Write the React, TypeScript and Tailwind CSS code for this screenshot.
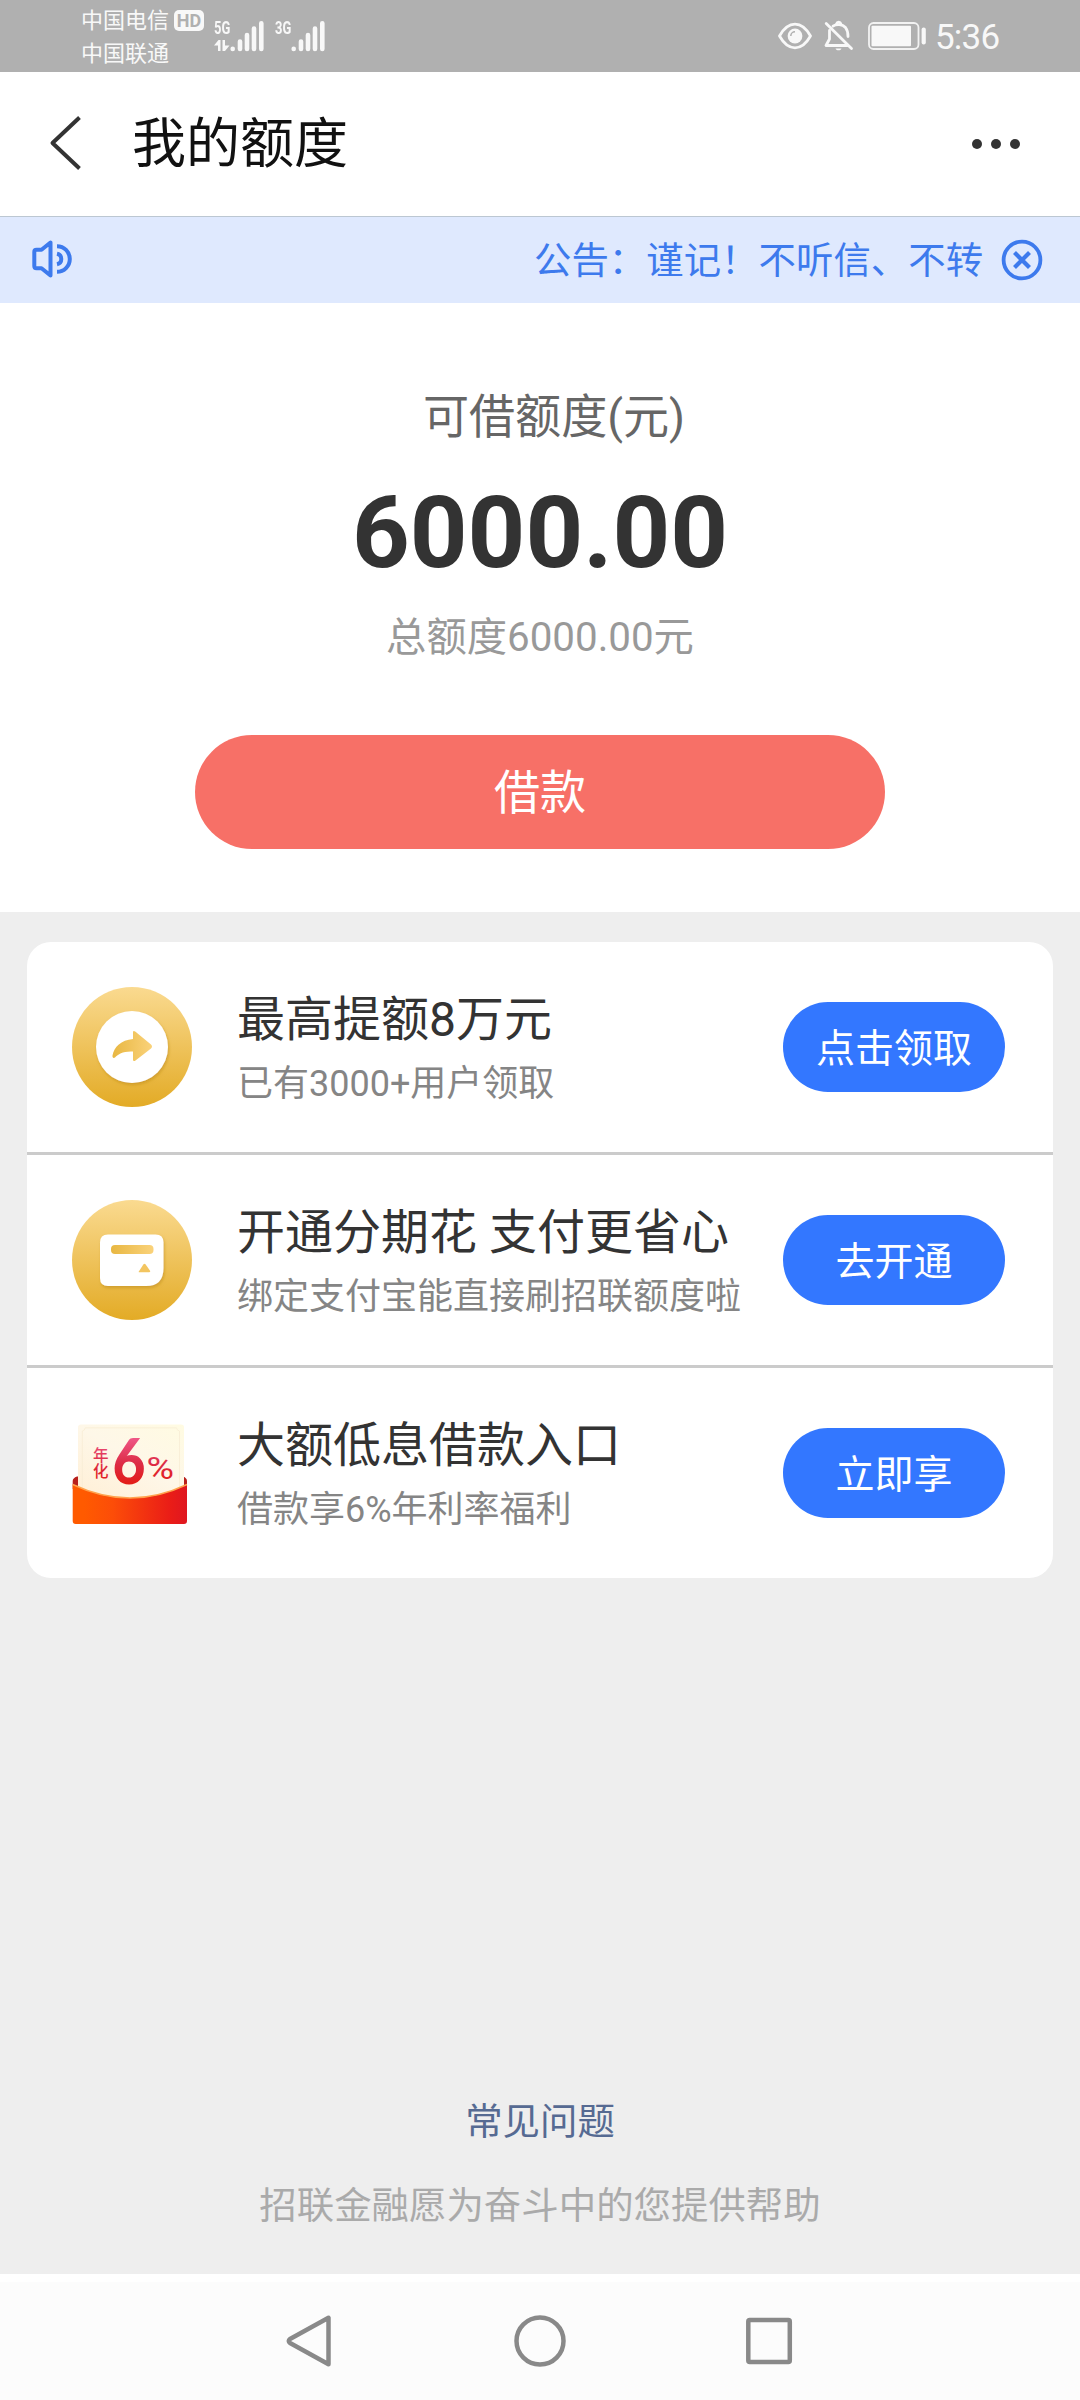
import type { ReactNode } from "react";

type Offer = {
  icon: ReactNode;
  title: string;
  desc: string;
  action: string;
};

function SignalBars() {
  return (
    <svg viewBox="0 0 34 32" className="h-8 w-[34px]" fill="none" stroke="#f8f8f8" strokeWidth="4.6" strokeLinecap="round" aria-hidden>
      <path d="M2.7 28.9V29M10 21.5V29M17 15V29M24 8.5V29M31.3 3.2V29" />
    </svg>
  );
}

function EyeIcon() {
  return (
    <svg viewBox="0 0 34 28" className="h-7 w-[34px]" aria-hidden>
      <path d="M1.5 14C6 6 11 2.2 17 2.2S28 6 32.5 14C28 22 23 25.8 17 25.8S6 22 1.5 14Z" fill="none" stroke="#f8f8f8" strokeWidth="2.8" strokeLinejoin="round" />
      <circle cx="17" cy="14" r="7.4" fill="#f8f8f8" />
      <path d="M12.8 14a4.2 4.2 0 0 1 4.2-4.2" fill="none" stroke="#b0b0b0" strokeWidth="1.5" />
    </svg>
  );
}

function BellOffIcon() {
  return (
    <svg viewBox="0 0 30 32" className="h-8 w-[30px]" fill="none" stroke="#f8f8f8" strokeWidth="2.8" strokeLinecap="round" strokeLinejoin="round" aria-hidden>
      <path d="M2.2 3.5 27.5 28.5" />
      <path d="M5.5 10.5V19l-3.5 6.5H23.5" />
      <path d="M9 6.2C12 4 18.5 4 21.5 7.5c2.3 3 2.5 5.5 2.5 9" />
      <path d="M12.5 3.8a2.3 2.3 0 0 1 4.4 0" />
      <path d="M11.5 28.4h6c-.8 2.5-5.2 2.5-6 0Z" fill="#f8f8f8" stroke="none" />
    </svg>
  );
}

function BatteryIcon() {
  return (
    <svg viewBox="0 0 58 28" className="h-7 w-[58px]" aria-hidden>
      <rect x="1" y="1" width="49.5" height="26" rx="4.5" fill="none" stroke="#f2f2f2" strokeWidth="1.8" />
      <rect x="3.5" y="3.8" width="39.5" height="20.4" rx="1" fill="#f8f8f8" />
      <rect x="53.6" y="5.5" width="4.2" height="17" rx="2" fill="#f8f8f8" />
    </svg>
  );
}

function StatusBar() {
  return (
    <div className="flex h-[72px] bg-[#b0b0b0] text-[#f8f8f8]">
      <div className="ml-[81px] flex h-[72px] flex-col pt-1 text-[22px] leading-[33px]">
        <div className="flex items-center">
          <span>中国电信</span>
          <span className="ml-[5px] flex h-[21px] w-[30px] items-center justify-center rounded-[5px] bg-[#f8f8f8] text-[18px] leading-none font-bold text-[#b0b0b0]">
            HD
          </span>
        </div>
        <span>中国联通</span>
      </div>
      <div className="mt-5 ml-2.5 flex h-8">
        <div className="flex w-4 flex-col">
          <span className="origin-left scale-x-[0.72] text-[18px] leading-4 font-bold">5G</span>
          <svg viewBox="0 0 16 12" className="mt-1 h-3 w-4" fill="#f8f8f8" aria-hidden>
            <path d="M0 5.5 4.5 0H6.5V11H4V5.5ZM8.5 0H11V5.5H15.5L11 11H8.5Z" />
          </svg>
        </div>
        <SignalBars />
      </div>
      <div className="mt-5 ml-[11px] flex h-8">
        <span className="w-4 origin-left scale-x-[0.72] text-[18px] leading-4 font-bold">3G</span>
        <SignalBars />
      </div>
      <div className="mr-[79px] ml-auto flex items-center">
        <EyeIcon />
        <span className="ml-3 flex"><BellOffIcon /></span>
        <span className="ml-[14px] flex"><BatteryIcon /></span>
        <span className="ml-[9px] w-[66px] pt-0.5 text-[35px] leading-none tracking-[-0.8px] whitespace-nowrap">5:36</span>
      </div>
    </div>
  );
}

function Header() {
  return (
    <header className="flex h-[145px] items-center border-b border-[#bcc7d2] bg-white">
      <svg viewBox="0 0 34 54" className="mb-0.5 ml-12 h-[54px] w-[34px]" fill="none" stroke="#333" strokeWidth="4" aria-hidden>
        <path d="M31.5 1.5 4.5 27 31.5 52.5" strokeLinejoin="round" />
      </svg>
      <h1 className="ml-[50px] pt-0.5 text-[54px] leading-[72px] text-[#111]">我的额度</h1>
      <div className="mr-[60px] ml-auto flex gap-[9px]">
        <i className="size-2.5 rounded-full bg-[#333]" />
        <i className="size-2.5 rounded-full bg-[#333]" />
        <i className="size-2.5 rounded-full bg-[#333]" />
      </div>
    </header>
  );
}

function Notice() {
  return (
    <div className="flex h-[86px] items-center bg-[#dfe9fe] text-[#3d7aed]">
      <svg viewBox="0 0 40 38" className="mb-[3px] ml-8 h-[38px] w-10" fill="none" stroke="currentColor" strokeWidth="4" aria-hidden>
        <path d="M18.5 2.5V35.5L9.5 28.2H4.5Q2.3 28.2 2.3 26V12Q2.3 9.8 4.5 9.8H9.5Z" strokeLinejoin="round" />
        <path d="M25 6.2a12.7 12.7 0 0 1 0 25.6M25 13.8a5.3 5.3 0 0 1 0 10.4" />
      </svg>
      <div className="ml-[462px] w-[450px] pt-0.5 text-[37.44px] leading-[54px] whitespace-nowrap">
        公告：谨记！不听信、不转
      </div>
      <svg viewBox="0 0 42 42" className="ml-[17px] size-[42px]" fill="none" stroke="currentColor" strokeWidth="3.8" aria-hidden>
        <circle cx="21" cy="21" r="18.4" />
        <path d="M13.5 13.5 28.5 28.5M28.5 13.5 13.5 28.5" strokeWidth="4.2" />
      </svg>
    </div>
  );
}

function ShareCoin() {
  return (
    <svg viewBox="0 0 120 120" className="size-[120px]" aria-hidden>
      <defs>
        <linearGradient id="coin" x1="0" y1="0" x2="0" y2="1">
          <stop offset="0" stopColor="#fada90" />
          <stop offset="1" stopColor="#e3ab26" />
        </linearGradient>
        <linearGradient id="arrow" x1="0" y1="0" x2="1" y2="0">
          <stop offset="0" stopColor="#e8b742" />
          <stop offset="1" stopColor="#fad27a" />
        </linearGradient>
        <filter id="soft" x="-20%" y="-20%" width="140%" height="140%">
          <feDropShadow dx="1" dy="2" stdDeviation="1.5" floodColor="#b88412" floodOpacity="0.5" />
        </filter>
      </defs>
      <circle cx="60" cy="60" r="60" fill="url(#coin)" />
      <circle cx="60" cy="60" r="36" fill="#fff" filter="url(#soft)" />
      <path d="M61 45.5Q61 43 63.5 44.8L79 57.5Q81 59.5 79 61.5L63.5 73.5Q61 75 61 72.5V64.5C51 64 46.5 67 43 70.5C41.5 71.5 40.2 70.5 40.5 68.5C42 60 49 53 61 52Z" fill="url(#arrow)" />
    </svg>
  );
}

function CardCoin() {
  return (
    <svg viewBox="0 0 120 120" className="size-[120px]" aria-hidden>
      <circle cx="60" cy="60" r="60" fill="url(#coin)" />
      <path d="M36 34.5H83.5Q91.5 34.5 91.5 42.5V68Q91.5 86 74 86H36Q28 86 28 78V42.5Q28 34.5 36 34.5Z" fill="#fff" filter="url(#soft)" />
      <rect x="39" y="45" width="42.5" height="9" rx="4" fill="url(#arrow)" />
      <path d="M66.5 72 71.5 64.3Q72.5 63.3 73.5 64.3L78.2 71Q78.5 72.2 77 72.2H67Z" fill="#f3c560" />
    </svg>
  );
}

function Envelope() {
  return (
    <svg viewBox="0 0 120 120" className="size-[120px]" aria-hidden>
      <defs>
        <linearGradient id="pocket" x1="0" y1="0" x2="1" y2="0">
          <stop offset="0.1" stopColor="#ff5a00" />
          <stop offset="0.35" stopColor="#fc4d08" />
          <stop offset="0.85" stopColor="#ea1d17" />
          <stop offset="1" stopColor="#df1620" />
        </linearGradient>
        <linearGradient id="paper" x1="1" y1="0" x2="0.2" y2="1">
          <stop offset="0" stopColor="#fffbe2" />
          <stop offset="0.5" stopColor="#fef7e8" />
          <stop offset="1" stopColor="#fff0d8" />
        </linearGradient>
        <linearGradient id="rate" gradientUnits="userSpaceOnUse" x1="0" y1="26" x2="0" y2="70">
          <stop offset="0" stopColor="#ee5585" />
          <stop offset="0.55" stopColor="#dd2c46" />
          <stop offset="1" stopColor="#e31d18" />
        </linearGradient>
      </defs>
      <path d="M.7 72V68Q.7 65 5 63.5H111Q115 65 115 68V76H.7Z" fill="#b8201d" />
      <path d="M6 14Q6 11.5 9 11.5H109Q112 11.5 112 14V90H6Z" fill="url(#paper)" />
      <path d="M10.3 76V18Q13 17.5 13.2 14.8H104.5Q104.8 17.5 107.5 18V76" fill="none" stroke="#f8ecd4" strokeWidth="0.8" />
      <path d="M.7 71.5Q58 98.5 115 71.5V108Q115 111 112 111H3.7Q.7 111 .7 108Z" fill="url(#pocket)" />
      <path d="M.7 71.5Q58 98.5 115 71.5" fill="none" stroke="#ffa24d" strokeWidth="1.5" />
      <g fill="url(#rate)">
        <text fontSize="15.5" fontWeight="500" fontFamily="'Noto Sans CJK SC', sans-serif">
          <tspan x="21" y="47.5">年</tspan>
          <tspan x="21" y="64.2">化</tspan>
        </text>
        <text x="40.5" y="70.8" fontSize="62" fontWeight="900" fontFamily="Lato, sans-serif" textLength="33" lengthAdjust="spacingAndGlyphs">6</text>
        <text x="74.5" y="65.5" fontSize="31.5" fontWeight="400" fontFamily="Roboto, sans-serif" textLength="27.5" lengthAdjust="spacingAndGlyphs">%</text>
      </g>
    </svg>
  );
}

const offers: Offer[] = [
  { icon: <ShareCoin />, title: "最高提额8万元", desc: "已有3000+用户领取", action: "点击领取" },
  { icon: <CardCoin />, title: "开通分期花 支付更省心", desc: "绑定支付宝能直接刷招联额度啦", action: "去开通" },
  { icon: <Envelope />, title: "大额低息借款入口", desc: "借款享6%年利率福利", action: "立即享" },
];

function OfferRow({ icon, title, desc, action }: Offer) {
  return (
    <li className="box-content flex h-[210px] items-center pr-12 pl-[45px]">
      {icon}
      <div className="ml-[45px] flex-1 pt-1 whitespace-nowrap">
        <h2 className="text-[48px] leading-[70px] text-[#333]">{title}</h2>
        <p className="text-[36px] leading-[58px] text-[#858585]">{desc}</p>
      </div>
      <button className="h-[90px] w-[222px] rounded-full bg-[#37f] pt-1 text-[39px] text-white">{action}</button>
    </li>
  );
}

function NavBar() {
  return (
    <nav className="flex h-[126px] items-center justify-center gap-[178px] border-t-8 border-white bg-[#fcfcfc]">
      <svg viewBox="0 0 52 52" className="size-[52px]" fill="none" stroke="#898989" strokeWidth="4.5" strokeLinejoin="round" aria-hidden>
        <path d="M44.5 2.8V49.2L6 28Q3.5 26 6 24Z" />
      </svg>
      <svg viewBox="0 0 52 52" className="size-[52px]" fill="none" stroke="#898989" strokeWidth="4.5" aria-hidden>
        <circle cx="26" cy="26" r="23.5" />
      </svg>
      <svg viewBox="0 0 52 52" className="size-[52px]" fill="none" stroke="#898989" strokeWidth="4.5" aria-hidden>
        <rect x="4.3" y="5" width="41.5" height="42" rx="1.5" />
      </svg>
    </nav>
  );
}

export default function App() {
  return (
    <div className="flex h-[2400px] w-[1080px] flex-col overflow-hidden bg-[#eee] font-[Roboto,'Noto_Sans_CJK_SC',sans-serif]">
      <StatusBar />
      <Header />
      <Notice />

      <section className="flex h-[609px] flex-col items-center bg-white">
        <p className="mt-[85px] ml-[28px] text-[46.08px] leading-[58px] text-[#666]">可借额度(元)</p>
        <p className="mt-[28px] text-[100.8px] leading-[118px] font-bold text-[#333]">6000.00</p>
        <p className="mt-[18px] text-[40.32px] leading-[56px] text-[#999]">总额度6000.00元</p>
        <button className="mt-[69px] h-[114px] w-[690px] rounded-full bg-[#f77067] pt-[3px] text-[46.08px] text-white">
          借款
        </button>
      </section>

      <ul className="mx-[27px] mt-[30px] divide-y-[3px] divide-[#cbcbcb] overflow-hidden rounded-[24px] bg-white">
        {offers.map((o) => (
          <OfferRow key={o.title} {...o} />
        ))}
      </ul>

      <footer className="mt-auto mb-10 flex flex-col items-center text-[37.44px] leading-[56px]">
        <a className="text-[#566a92]">常见问题</a>
        <p className="mt-7 text-[#aaa]">招联金融愿为奋斗中的您提供帮助</p>
      </footer>
      <NavBar />
    </div>
  );
}
